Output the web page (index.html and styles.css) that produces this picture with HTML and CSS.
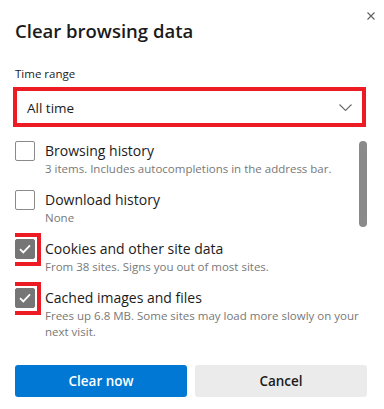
FILE: index.html
```html
<!DOCTYPE html>
<html lang="en">
<head>
<meta charset="utf-8">
<title>Clear browsing data</title>
<link rel="stylesheet" href="styles.css">
</head>
<body>
<div class="dialog">
  <div class="header">
    <h1 class="title">Clear browsing data</h1>
    <button class="close" aria-label="Close">
      <svg width="8" height="8" viewBox="0 0 8 8"><path d="M0.5 0.5L7.5 7.5M7.5 0.5L0.5 7.5" stroke="#5f5f5f" stroke-width="1.1" fill="none"/></svg>
    </button>
  </div>
  <div class="label">Time range</div>
  <div class="select hl-box">
    <span class="select-value">All time</span>
    <svg class="chevron" width="13" height="7" viewBox="0 0 13 7"><path d="M0.5 0.5L6.5 6.5L12.5 0.5" stroke="#6b6b6b" stroke-width="1.1" fill="none"/></svg>
  </div>
  <div class="list-wrap">
    <div class="list">
      <div class="row">
        <span class="cb-slot"><span class="cb"></span></span>
        <div class="row-text">
          <div class="row-title">Browsing history</div>
          <div class="row-sub">3 items. Includes autocompletions in the address bar.</div>
        </div>
      </div>
      <div class="row">
        <span class="cb-slot"><span class="cb"></span></span>
        <div class="row-text">
          <div class="row-title">Download history</div>
          <div class="row-sub">None</div>
        </div>
      </div>
      <div class="row">
        <span class="cb-slot hl-cb"><span class="cb checked"><svg width="12" height="10" viewBox="0 0 12 10"><path d="M1 5.2L4.3 8.4L11 1.4" stroke="#fff" stroke-width="1.8" fill="none"/></svg></span></span>
        <div class="row-text">
          <div class="row-title">Cookies and other site data</div>
          <div class="row-sub">From 38 sites. Signs you out of most sites.</div>
        </div>
      </div>
      <div class="row">
        <span class="cb-slot hl-cb"><span class="cb checked"><svg width="12" height="10" viewBox="0 0 12 10"><path d="M1 5.2L4.3 8.4L11 1.4" stroke="#fff" stroke-width="1.8" fill="none"/></svg></span></span>
        <div class="row-text">
          <div class="row-title">Cached images and files</div>
          <div class="row-sub">Frees up 6.8 MB. Some sites may load more slowly on your next visit.</div>
        </div>
      </div>
    </div>
    <div class="scrollbar"><div class="thumb"></div></div>
  </div>
  <div class="actions">
    <button class="btn primary">Clear now</button>
    <button class="btn secondary">Cancel</button>
  </div>
</div>
</body>
</html>
```

FILE: styles.css
```css
* { box-sizing: border-box; }
html, body {
  margin: 0;
  padding: 0;
  background: #ffffff;
}
body {
  font-family: "Open Sans", "Noto Sans", sans-serif;
  color: #1b1b1b;
  width: 384px;
  height: 409px;
  overflow: hidden;
}
.dialog {
  padding: 0 17px 0 15px;
}
.header {
  display: flex;
  align-items: flex-start;
  padding-top: 17px;
}
.title {
  flex: 1;
  margin: 0;
  font-size: 18.5px;
  font-weight: 600;
  line-height: 28px;
  color: #1b1b1b;
}
.close {
  margin: -5px -8px 0 0;
  padding: 0;
  width: 8px;
  height: 8px;
  border: 0;
  background: none;
  display: flex;
}
.label {
  margin-top: 21px;
  font-size: 11.5px;
  line-height: 16px;
  color: #1b1b1b;
}
.select {
  margin: 5px 1px 0 -2px;
  height: 40px;
  display: flex;
  align-items: center;
  justify-content: space-between;
  padding: 0 10px 0 10px;
  background: #fff;
}
.hl-box {
  border: 4px solid #ed1c24;
}
.select-value {
  font-size: 13.5px;
  color: #1b1b1b;
  padding-top: 1px;
}
.chevron {
  margin-top: 1px;
}
.list-wrap {
  margin-top: 14px;
  height: 210px;
  display: flex;
  overflow: hidden;
}
.list {
  flex: 1;
  min-width: 0;
}
.row {
  display: flex;
  gap: 10px;
  margin-bottom: 13px;
}
.cb-slot {
  flex: none;
  width: 20px;
  height: 20px;
  display: flex;
}
.hl-cb {
  width: 32px;
  height: 33px;
  margin: -6px -6px -7px -6px;
  border: 4px solid #ed1c24;
  padding: 2px 2px 3px 2px;
}
.cb {
  width: 20px;
  height: 20px;
  border: 1px solid #8a8a8a;
  border-radius: 2px;
  background: #fff;
  display: flex;
  align-items: center;
  justify-content: center;
}
.cb.checked {
  background: #767676;
  border-color: #767676;
}
.row-text {
  flex: 1;
  min-width: 0;
}
.row-title {
  font-size: 14px;
  line-height: 20px;
  color: #1b1b1b;
}
.row-sub {
  font-size: 11.5px;
  line-height: 16px;
  color: #787878;
}
.scrollbar {
  flex: none;
  width: 8px;
}
.thumb {
  height: 86px;
  background: #8a8a8a;
  border-radius: 4px;
}
.actions {
  margin-top: 14px;
  display: flex;
  gap: 8px;
}
.btn {
  flex: 1;
  height: 32px;
  border: 0;
  border-radius: 3px;
  font-family: "Open Sans", "Noto Sans", sans-serif;
  font-size: 13.5px;
  font-weight: 600;
}
.primary {
  background: #0078d4;
  color: #ffffff;
}
.secondary {
  background: #ebebeb;
  color: #1b1b1b;
}
```
